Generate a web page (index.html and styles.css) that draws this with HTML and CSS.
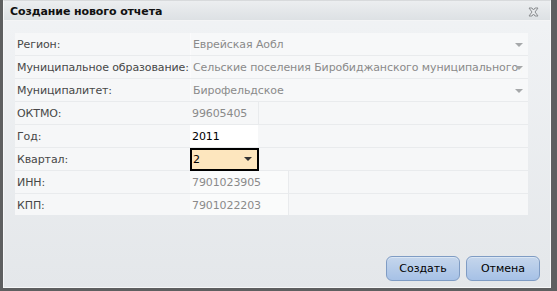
FILE: index.html
```html
<!DOCTYPE html>
<html lang="ru">
<head>
    <meta charset="UTF-8">
    <title>Создание нового отчета</title>
    <link rel="stylesheet" href="styles.css">
</head>
<body>
    <div class="window">
        <div class="title-bar">
            <span class="title">Создание нового отчета</span>
            <span class="close">
                <svg width="11" height="10" viewBox="0 0 11 10">
                    <path d="M1 1h3l1.5 2 1.5-2h3l-3 4 3 4h-3l-1.5-2-1.5 2h-3l3-4z" fill="#e8eaec" stroke="#8a8d90" stroke-width="1"/>
                </svg>
            </span>
        </div>

        <div class="content">
            <div class="form">
                <div class="row">
                    <label>Регион:</label>
                    <div class="combo wide disabled">Еврейская Аобл<span class="arrow"></span></div>
                </div>
                <div class="row">
                    <label>Муниципальное образование:</label>
                    <div class="combo wide disabled"><span class="clip">Сельские поселения Биробиджанского муниципального района</span><span class="arrow"></span></div>
                </div>
                <div class="row">
                    <label>Муниципалитет:</label>
                    <div class="combo wide disabled">Бирофельдское<span class="arrow"></span></div>
                </div>
                <div class="row">
                    <label>ОКТМО:</label>
                    <div class="field short disabled">99605405</div>
                </div>
                <div class="row">
                    <label>Год:</label>
                    <div class="field short active">2011</div>
                </div>
                <div class="row">
                    <label>Квартал:</label>
                    <div class="combo short focused">2<span class="arrow dark"></span></div>
                </div>
                <div class="row">
                    <label>ИНН:</label>
                    <div class="field medium disabled">7901023905</div>
                </div>
                <div class="row">
                    <label>КПП:</label>
                    <div class="field medium disabled">7901022203</div>
                </div>
            </div>

            <div class="buttons">
                <button>Создать</button>
                <button>Отмена</button>
            </div>
        </div>
    </div>
</body>
</html>
```
FILE: styles.css
```css
body {
    margin: 0;
    padding: 0;
    background-color: #5e5f60;
    font-family: "DejaVu Sans", Verdana, sans-serif;
    font-size: 11px;
    letter-spacing: -0.1px;
}

.window {
    width: 546px;
    height: 286px;
    margin: 0 6px 0 3px;
    border: 1px solid #f6f7f8;
    border-top-color: #d8dadc;
    background: linear-gradient(#f1f3f5, #e4e7ea);
}

.title-bar {
    height: 19px;
    display: flex;
    align-items: center;
    justify-content: space-between;
    padding: 0 11px 0 6px;
    background: linear-gradient(#eceef0, #dde1e4);
    border-bottom: 1px solid #f4f5f6;
}

.title {
    font-weight: bold;
    font-size: 11px;
    letter-spacing: -0.1px;
    color: #111;
    padding-top: 1px;
}

.close {
    display: flex;
    padding-top: 2px;
}

.content {
    padding: 12px 0 0 11px;
}

.form {
    width: 513px;
    background-color: #f6f7f8;
}

.row {
    display: flex;
    height: 22px;
    border-bottom: 1px solid #e9ebed;
}

.row:last-child {
    border-bottom: none;
    height: 21px;
}

.row label {
    width: 173px;
    padding-left: 2px;
    padding-top: 1px;
    line-height: 22px;
    color: #474747;
    white-space: nowrap;
}

.combo, .field {
    position: relative;
    line-height: 22px;
    padding-top: 1px;
    padding-left: 2px;
    white-space: nowrap;
    overflow: hidden;
    box-sizing: border-box;
}

.disabled {
    color: #8a8a8a;
}

.combo.wide {
    width: 338px;
    padding-right: 12px;
    border-left: 1px solid #fbfbfc;
    background-color: #f7f8f9;
}

.clip {
    display: block;
    overflow: hidden;
    width: 329px;
}

.field.short {
    width: 69px;
    border-right: 1px solid #e9ebed;
}

.field.medium {
    width: 99px;
    border-right: 1px solid #e9ebed;
    background-color: #fafbfb;
}

.field.active {
    background-color: #ffffff;
    color: #000;
    border-right-color: #f6f7f8;
}

.combo.focused {
    width: 69px;
    height: 23px;
    border: 2px solid #000;
    background-color: #fde6be;
    color: #000;
    line-height: 19px;
    padding-top: 0;
    padding-left: 1px;
}

.arrow {
    position: absolute;
    right: 5px;
    top: 10px;
    width: 0;
    height: 0;
    border-left: 4px solid transparent;
    border-right: 4px solid transparent;
    border-top: 4px solid #a6a8aa;
}

.arrow.dark {
    right: 5px;
    top: 7px;
    border-top-color: #333;
}

.buttons {
    display: flex;
    justify-content: flex-end;
    gap: 6px;
    margin-top: 41px;
    padding-right: 10px;
}

button {
    width: 74px;
    height: 25px;
    font-family: "DejaVu Sans", Verdana, sans-serif;
    font-size: 11px;
    color: #000;
    border: 1px solid #7f9cc4;
    border-radius: 6px;
    background: linear-gradient(#c5d6ec, #a6c1e6);
    box-shadow: inset 0 1px 0 #dae6f4;
    cursor: pointer;
}
```
